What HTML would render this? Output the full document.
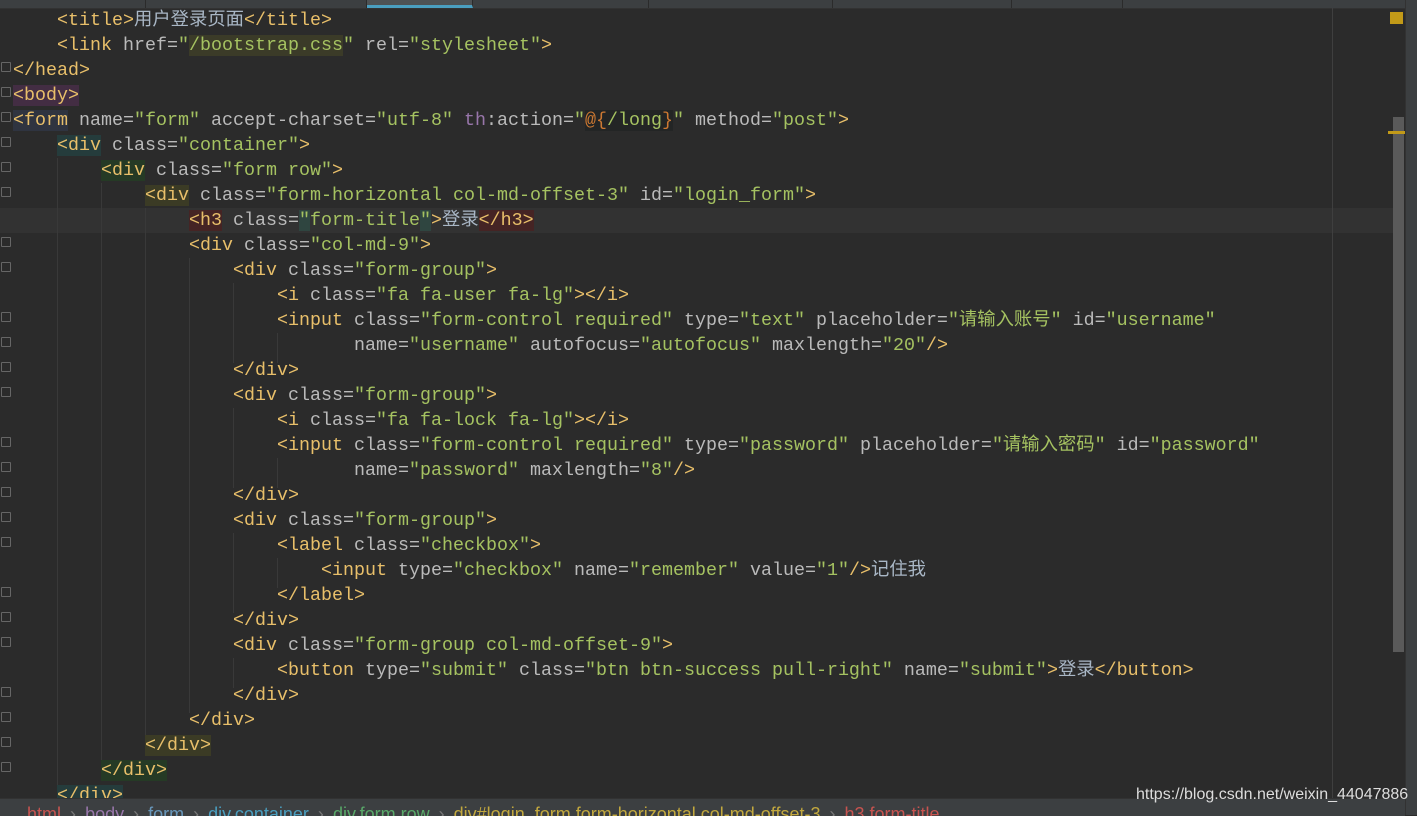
<!DOCTYPE html>
<html><head><meta charset="utf-8">
<style>
body{margin:0;width:1417px;height:815px;overflow:hidden;background:#2b2b2b;position:relative;font-family:"Liberation Mono","Noto Sans CJK SC",monospace;}
.tabs{position:absolute;left:0;top:0;width:1405px;height:8px;background:#3c3f41;border-bottom:1px solid #323232;}
.tab{position:absolute;top:0;height:8px;border-right:1px solid #2b2b2b;}
.cur{position:absolute;left:0;top:208px;width:1393px;height:25px;background:#323232;}
.code{position:absolute;left:13px;top:8px;font-size:18.33px;line-height:25px;white-space:normal;color:#bababa;}
.l{height:25px;white-space:pre;}
.t{color:#e8bf6a}.v{color:#a5c261}.a{color:#bababa}.c{color:#a9b7c6}.p{color:#9876aa}.o{color:#cc7832}
.guide{position:absolute;width:1px;background:#393939;}
.margin{position:absolute;left:1332px;top:8px;width:1px;height:790px;background:#3f3f3f;}
.scroll{position:absolute;left:1393px;top:117px;width:11px;height:535px;background:#5a5a5a;}
.side{position:absolute;left:1405px;top:0;width:12px;height:815px;background:#3c3f41;border-left:1px solid #323232;}
.status{position:absolute;left:0;top:798px;width:1405px;height:17px;background:#3c3f41;border-top:1px solid #323232;font-family:"Liberation Sans",sans-serif;font-size:18px;line-height:30px;white-space:nowrap;overflow:hidden;word-spacing:4px;}
.wm{position:absolute;left:1136px;top:786px;font-family:"Liberation Sans",sans-serif;font-size:16px;color:#ddd;}
.fold{position:absolute;left:1px;width:8px;height:8px;border:1px solid #666;border-radius:1px;}
</style></head><body>
<div class="tabs">
<div class="tab" style="left:45px;width:100px"></div>
<div class="tab" style="left:146px;width:220px"></div>
<div class="tab" style="left:367px;width:105px;background:#4e5254;border-bottom:3px solid #4a9ebf;height:5px"></div>
<div class="tab" style="left:473px;width:175px"></div>
<div class="tab" style="left:649px;width:183px"></div>
<div class="tab" style="left:833px;width:178px"></div>
<div class="tab" style="left:1012px;width:110px"></div>
</div>
<div class="cur"></div>
<div class="guide" style="left:57px;top:158px;height:630px"></div>
<div class="guide" style="left:101px;top:183px;height:580px"></div>
<div class="guide" style="left:145px;top:208px;height:530px"></div>
<div class="guide" style="left:189px;top:258px;height:455px"></div>
<div class="guide" style="left:233px;top:283px;height:80px"></div>
<div class="guide" style="left:233px;top:408px;height:80px"></div>
<div class="guide" style="left:233px;top:533px;height:80px"></div>
<div class="guide" style="left:233px;top:658px;height:30px"></div>
<div class="guide" style="left:277px;top:333px;height:30px"></div>
<div class="guide" style="left:277px;top:458px;height:30px"></div>
<div class="guide" style="left:277px;top:558px;height:30px"></div>
<div class="margin"></div>
<div class="code"><div class="l">    <span class="t">&lt;title&gt;</span><span class="c">用户登录页面</span><span class="t">&lt;/title&gt;</span></div><div class="l">    <span class="t">&lt;link</span> href=<span class="v">"<span style="background:#3b3b28">/bootstrap.css</span>"</span> rel=<span class="v">"stylesheet"</span><span class="t">&gt;</span></div><div class="l"><span class="t">&lt;/head&gt;</span></div><div class="l"><span class="t" style="background:#432d43">&lt;body&gt;</span></div><div class="l"><span class="t" style="background:#2f3440">&lt;form</span> name=<span class="v">"form"</span> accept-charset=<span class="v">"utf-8"</span> <span class="p">th</span>:action=<span class="v">"<span class="o" style="background:#232525">@{</span><span style="background:#232525">/long</span><span class="o" style="background:#232525">}</span>"</span> method=<span class="v">"post"</span><span class="t">&gt;</span></div><div class="l">    <span class="t" style="background:#253c3c">&lt;div</span> class=<span class="v">"container"</span><span class="t">&gt;</span></div><div class="l">        <span class="t" style="background:#253a25">&lt;div</span> class=<span class="v">"form row"</span><span class="t">&gt;</span></div><div class="l">            <span class="t" style="background:#3b3b25">&lt;div</span> class=<span class="v">"form-horizontal col-md-offset-3"</span> id=<span class="v">"login_form"</span><span class="t">&gt;</span></div><div class="l">                <span class="t" style="background:#452424">&lt;h3</span> class=<span class="v"><span style="background:#2f4540">"</span>form-title<span style="background:#2f4540">"</span></span><span class="t">&gt;</span><span class="c">登录</span><span class="t" style="background:#452424">&lt;/h3&gt;</span></div><div class="l">                <span class="t">&lt;div</span> class=<span class="v">"col-md-9"</span><span class="t">&gt;</span></div><div class="l">                    <span class="t">&lt;div</span> class=<span class="v">"form-group"</span><span class="t">&gt;</span></div><div class="l">                        <span class="t">&lt;i</span> class=<span class="v">"fa fa-user fa-lg"</span><span class="t">&gt;&lt;/i&gt;</span></div><div class="l">                        <span class="t">&lt;input</span> class=<span class="v">"form-control required"</span> type=<span class="v">"text"</span> placeholder=<span class="v">"请输入账号"</span> id=<span class="v">"username"</span></div><div class="l">                               name=<span class="v">"username"</span> autofocus=<span class="v">"autofocus"</span> maxlength=<span class="v">"20"</span><span class="t">/&gt;</span></div><div class="l">                    <span class="t">&lt;/div&gt;</span></div><div class="l">                    <span class="t">&lt;div</span> class=<span class="v">"form-group"</span><span class="t">&gt;</span></div><div class="l">                        <span class="t">&lt;i</span> class=<span class="v">"fa fa-lock fa-lg"</span><span class="t">&gt;&lt;/i&gt;</span></div><div class="l">                        <span class="t">&lt;input</span> class=<span class="v">"form-control required"</span> type=<span class="v">"password"</span> placeholder=<span class="v">"请输入密码"</span> id=<span class="v">"password"</span></div><div class="l">                               name=<span class="v">"password"</span> maxlength=<span class="v">"8"</span><span class="t">/&gt;</span></div><div class="l">                    <span class="t">&lt;/div&gt;</span></div><div class="l">                    <span class="t">&lt;div</span> class=<span class="v">"form-group"</span><span class="t">&gt;</span></div><div class="l">                        <span class="t">&lt;label</span> class=<span class="v">"checkbox"</span><span class="t">&gt;</span></div><div class="l">                            <span class="t">&lt;input</span> type=<span class="v">"checkbox"</span> name=<span class="v">"remember"</span> value=<span class="v">"1"</span><span class="t">/&gt;</span><span class="c">记住我</span></div><div class="l">                        <span class="t">&lt;/label&gt;</span></div><div class="l">                    <span class="t">&lt;/div&gt;</span></div><div class="l">                    <span class="t">&lt;div</span> class=<span class="v">"form-group col-md-offset-9"</span><span class="t">&gt;</span></div><div class="l">                        <span class="t">&lt;button</span> type=<span class="v">"submit"</span> class=<span class="v">"btn btn-success pull-right"</span> name=<span class="v">"submit"</span><span class="t">&gt;</span><span class="c">登录</span><span class="t">&lt;/button&gt;</span></div><div class="l">                    <span class="t">&lt;/div&gt;</span></div><div class="l">                <span class="t">&lt;/div&gt;</span></div><div class="l">            <span class="t" style="background:#3b3b25">&lt;/div&gt;</span></div><div class="l">        <span class="t" style="background:#253a25">&lt;/div&gt;</span></div><div class="l">    <span class="t" style="background:#253c3c">&lt;/div&gt;</span></div></div>
<div class="fold" style="top:62px"></div><div class="fold" style="top:87px"></div><div class="fold" style="top:112px"></div>
<div class="fold" style="top:137px"></div><div class="fold" style="top:162px"></div><div class="fold" style="top:187px"></div>
<div class="fold" style="top:237px"></div><div class="fold" style="top:262px"></div><div class="fold" style="top:312px"></div>
<div class="fold" style="top:337px"></div><div class="fold" style="top:362px"></div><div class="fold" style="top:387px"></div>
<div class="fold" style="top:437px"></div><div class="fold" style="top:462px"></div><div class="fold" style="top:487px"></div>
<div class="fold" style="top:512px"></div><div class="fold" style="top:537px"></div><div class="fold" style="top:587px"></div>
<div class="fold" style="top:612px"></div><div class="fold" style="top:637px"></div><div class="fold" style="top:687px"></div>
<div class="fold" style="top:712px"></div><div class="fold" style="top:737px"></div><div class="fold" style="top:762px"></div>
<div class="scroll"></div>
<div style="position:absolute;left:1390px;top:12px;width:13px;height:12px;background:#c29a18"></div>
<div style="position:absolute;left:1388px;top:131px;width:17px;height:3px;background:#c29a18"></div>
<div class="side"></div>
<div class="status">&nbsp;&nbsp;&nbsp;<span style="color:#c75450">html</span> <span style="color:#777">›</span> <span style="color:#9876aa">body</span> <span style="color:#777">›</span> <span style="color:#6897bb">form</span> <span style="color:#777">›</span> <span style="color:#4a9ebf">div.container</span> <span style="color:#777">›</span> <span style="color:#59a869">div.form.row</span> <span style="color:#777">›</span> <span style="color:#c2a83e">div#login_form.form-horizontal.col-md-offset-3</span> <span style="color:#777">›</span> <span style="color:#c75450">h3.form-title</span></div>
<div class="wm">https://blog.csdn.net/weixin_44047886</div>
</body></html>
